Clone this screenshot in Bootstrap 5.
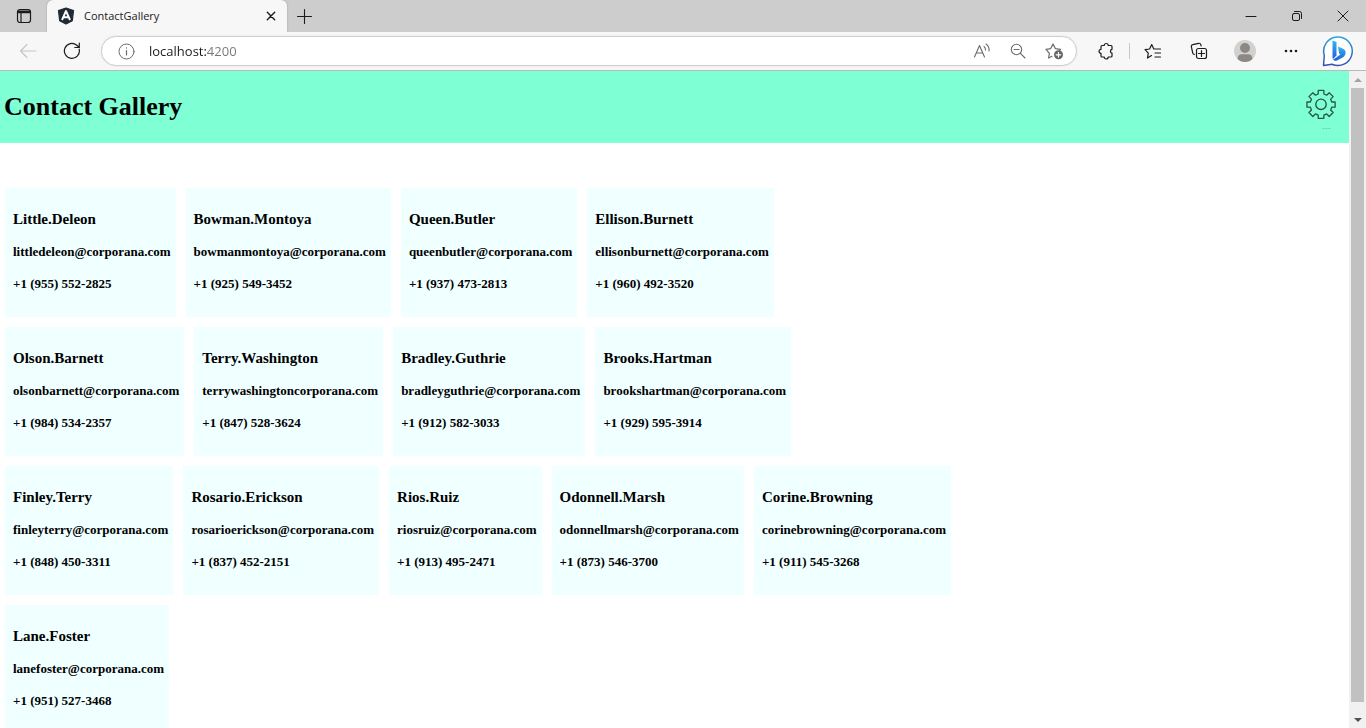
<!DOCTYPE html>
<html lang="en">
<head>
<meta charset="utf-8">
<meta name="viewport" content="width=device-width, initial-scale=1">
<title>ContactGallery</title>
<link href="https://cdn.jsdelivr.net/npm/bootstrap@5.3.0/dist/css/bootstrap.min.css" rel="stylesheet">
<style>
  body { font-family: "Open Sans", "Noto Sans", sans-serif; color: #000; }
  svg { display: block; fill: none; stroke: #1b1b1b; stroke-width: 1.2; stroke-linecap: round; stroke-linejoin: round; }
  button { flex: none; }
  .tool, .win, .inner { border: 0; padding: 0; background: none; display: flex; align-items: center; justify-content: center; }
  .tool { width: 46px; height: 38px; }
  .nav-tool { width: 44px; }
  .discover { width: 48px; }
  .win { width: 46px; height: 32px; }
  .inner { width: 36px; height: 28px; }
  .inner svg { stroke: #6b6b6b; }
  .tab-strip { height: 32px; background: #cdcdcd; }
  .tab-menu { width: 47px; }
  .page-tab { width: 240px; height: 32px; background: #f7f7f7; border-radius: 6px 6px 0 0; padding-left: 10px; box-shadow: 0 0 2px #999; }
  .tab-title { font-size: 11px; line-height: 16px; margin-left: 9px; color: #222; }
  .tab-close { width: 32px; }
  .new-tab { width: 34px; }
  .toolbar { height: 39px; background: #f7f7f7; border-bottom: 1px solid #b9b9b9; padding: 0 4px 0 6px; position: relative; }
  .address { height: 30px; background: #fff; border: 1px solid #cfcfcf; border-radius: 15px; margin: 0 6px 0 7px; padding: 0 4px 0 6px; box-shadow: 0 0 2px #ddd; }
  .address input { border: 0; outline: 0; padding: 0; margin-left: 5px; min-width: 0; font-size: 13px; line-height: 20px; color: transparent; caret-color: #000; background: linear-gradient(90deg, #1b1b1b 57px, #767676 57px); -webkit-background-clip: text; background-clip: text; }
  .split { width: 1px; height: 16px; background: #c9c9c9; }
  .app { font-family: "Liberation Serif", serif; font-weight: 700; background: #fff; }
  .app-head { background: #7fffd4; height: 72px; padding: 0 12px 0 4px; }
  .app-head h1 { font-size: 26px; line-height: 30px; font-weight: 700; }
  .gear { height: auto; width: auto; padding-top: 8px; }
  .gallery { padding: 45px 5px 0; }
  .contact { background: #f0ffff; padding: 21px 5px 25px 8px; }
  .contact h2 { font-size: 15px; line-height: 20px; font-weight: 700; margin: 0 0 15px; }
  .contact a, .contact p { display: block; font-size: 13px; line-height: 16px; margin: 0; color: #000; text-decoration: none; white-space: nowrap; }
  .contact a { margin-bottom: 16px; }
  .gap-cards { gap: 10px; }
  .rail { width: 17px; background: #f1f1f1; }
  .rail-thumb { width: 13px; background: #c1c1c1; }
  .rail-end { height: 17px; }
  .rail-foot { height: 26px; padding-top: 9px; }
</style>
</head>
<body class="vh-100 d-flex flex-column overflow-hidden">
  <header>
    <div class="tab-strip d-flex">
      <button class="win tab-menu" aria-label="Tab actions"><svg width="16" height="16" viewBox="0 0 16 16"><rect x="1.5" y="1.5" width="13" height="13" rx="2.5"/><path d="M2 3.3h12M2 4.300h12" stroke-width="1.8"/><path d="M5 5v9"/></svg></button>
      <div class="page-tab d-flex align-items-center">
        <svg width="18" height="18" viewBox="0 0 18 18"><path d="M9 1l7.5 2.6-1.2 10L9 17l-6.300-3.400L1.500 3.600z" fill="#1f2a36" stroke="#1f2a36"/><path d="M5 13L9 4l4 9M6.500 10.300h5" stroke="#fff" stroke-width="1.9" stroke-linecap="butt"/></svg>
        <span class="tab-title">ContactGallery</span>
        <button class="win tab-close ms-auto" aria-label="Close tab"><svg width="10" height="10" viewBox="0 0 10 10"><path d="M1.300 1.300l7.400 7.400M8.700 1.300L1.300 8.700" stroke-width="1.4"/></svg></button>
      </div>
      <button class="win new-tab" aria-label="New tab"><svg width="16" height="16" viewBox="0 0 16 16"><path d="M8.500 1.500v14M1.500 8.500h14" stroke-width="1.100"/></svg></button>
      <div class="d-flex ms-auto">
        <button class="win" aria-label="Minimize"><svg width="12" height="12" viewBox="0 0 12 12"><path d="M1 6.500h10" stroke-width="1"/></svg></button>
        <button class="win" aria-label="Restore"><svg width="12" height="12" viewBox="0 0 12 12"><g stroke-width="1"><rect x="1.500" y="3.500" width="7" height="7" rx="1.500"/><path d="M3.500 1.500H8.500a2 2 0 0 1 2 2V8.500"/></g></svg></button>
        <button class="win" aria-label="Close"><svg width="12" height="12" viewBox="0 0 12 12"><path d="M1 1l10 10M11 1L1 11" stroke-width="1"/></svg></button>
      </div>
    </div>
    <div class="toolbar d-flex align-items-center">
      <button class="tool nav-tool" aria-label="Back"><svg width="18" height="16" viewBox="0 0 18 16"><path d="M17 8H1.500M8 1.500L1.500 8 8 14.500" stroke="#c6c6c6"/></svg></button>
      <button class="tool nav-tool" aria-label="Reload"><svg width="18" height="18" viewBox="0 0 18 18"><path d="M16.200 7.200a7.500 7.500 0 1 1-2.400-4L16 5.300M16.300 1v4.500h-4.500"/></svg></button>
      <div class="address d-flex align-items-center flex-grow-1">
        <button class="inner" aria-label="Site information"><svg width="17" height="17" viewBox="0 0 17 17"><circle cx="8.500" cy="8.500" r="7.500" stroke-width="1"/><path d="M8.500 7.500v4.500M8.500 4.900v.2"/></svg></button>
        <input class="flex-grow-1" type="text" value="localhost:4200" aria-label="Address">
        <button class="inner" aria-label="Read aloud"><svg width="18" height="16" viewBox="0 0 18 16"><path d="M1.500 14L6.500 2.500 11.500 14M3.200 10h6.600M11 3.300q1.600 1.400 1.500 3.700M13 1q3.600 2.300 3 7" stroke-width="1.100"/></svg></button>
        <button class="inner" aria-label="Zoom"><svg width="16" height="16" viewBox="0 0 16 16"><g stroke-width="1.100"><circle cx="6.500" cy="6.500" r="5.200"/><path d="M4 6.500h5M10.400 10.400l4.600 4.600"/></g></svg></button>
        <button class="inner" aria-label="Add to favorites"><svg width="19" height="18" viewBox="0 0 19 18"><path d="M7 14.300l-3.400 1.700.8-4.700L1 7.300l4.700-.7L8 2l2.300 4.600 5.200.7-1.500 1.500"/><circle cx="13.500" cy="12.800" r="4.500" fill="#666" stroke="none"/><path d="M13.500 10.500v4.600M11.200 12.800h4.600" stroke="#fff"/></svg></button>
      </div>
      <button class="tool" aria-label="Extensions"><svg width="18" height="18" viewBox="0 0 18 18"><path d="M5 3.500h2.200a2 2 0 0 1 4 0H14a1 1 0 0 1 1 1v2.800a2 2 0 0 0 0 3.900V14a1 1 0 0 1-1 1h-2.800a2 2 0 0 1-4 0H5a1 1 0 0 1-1-1v-2.700a2 2 0 0 1 0-4V4.500a1 1 0 0 1 1-1z"/></svg></button>
      <div class="split"></div>
      <button class="tool" aria-label="Favorites"><svg width="18" height="17" viewBox="0 0 18 17"><path d="M7.500 12.500l-4 2.500.8-4.900L1 6.700l4.600-.7L7.700 1.500 9.800 6H16.500M11 10h5.500M11 14h5.500"/></svg></button>
      <button class="tool" aria-label="Collections"><svg width="18" height="18" viewBox="0 0 18 18"><path d="M4.300 12.500c-1-.3-1.400-.8-1.600-1.700L1.400 4.800c-.2-1 .3-1.900 1.300-2.100l6-1.400c1-.2 1.800.3 2.100 1.300l.3 1.200"/><rect x="6.500" y="6.500" width="10" height="10" rx="2"/><path d="M11.500 8.500v6M8.500 11.500h6"/></svg></button>
      <button class="tool" aria-label="Profile"><svg width="22" height="22" viewBox="0 0 22 22"><g stroke="none"><circle cx="11" cy="11" r="11" fill="#d3d1cf"/><circle cx="11" cy="8" r="5" fill="#8b8886"/><path d="M3.500 18.700Q4 14.300 8 14.300h6q4 0 4.500 4.400Q15.500 22 11 22T3.500 18.700z" fill="#8b8886"/></g></svg></button>
      <button class="tool" aria-label="Settings and more"><svg width="16" height="4" viewBox="0 0 16 4"><g fill="#1b1b1b" stroke="none"><circle cx="3" cy="2" r="1.300"/><circle cx="8" cy="2" r="1.300"/><circle cx="13" cy="2" r="1.300"/></g></svg></button>
      <button class="tool discover" aria-label="Discover"><svg width="32" height="32" viewBox="0 0 32 32"><defs><linearGradient id="ring" x1="0" y1="0" x2="0" y2="1"><stop offset="0" stop-color="#2ba6df"/><stop offset="1" stop-color="#3650ae"/></linearGradient><linearGradient id="bee" x1="0" y1="0" x2="0" y2="1"><stop offset="0" stop-color="#35b8ee"/><stop offset="1" stop-color="#1e5ddf"/></linearGradient></defs><path d="M1.500 30.500L2.300 20.500A14.300 14.300 0 1 1 10 29.200Z" fill="#fff" stroke="url(#ring)" stroke-width="1.500"/><path d="M10.500 5.500l4 1.500v13.500l-3.500 3.500q-.5-.5-.5-1.500z" fill="url(#bee)" stroke="none"/><path d="M16 11.500l5.500 2.500q2.500 1.300 2 4.500-.5 2.500-2.500 3.800L15 25.500q-2.500 1-4-.8l7.300-5.200-1.300-1.300z" fill="url(#bee)" stroke="none"/></svg></button>
    </div>
  </header>

  <div class="d-flex flex-grow-1 overflow-hidden">
    <main class="app flex-grow-1 overflow-hidden">
      <div class="app-head d-flex align-items-center justify-content-between">
        <h1 class="m-0">Contact Gallery</h1>
        <button class="inner gear" aria-label="Settings"><svg width="32" height="46" viewBox="0 0 32 46"><path d="M13 1.500h6v3.800l3 1.300 2.700-2.700 4.200 4.200-2.700 2.700 1.200 3H31v5.500h-3.600l-1.200 3 2.700 2.700-4.200 4.200L22 26.500l-3 1.300v3.400h-6v-3.400l-3-1.300-2.700 2.700L3.100 25l2.700-2.700-1.200-3H1v-5.500h3.600l1.200-3-2.700-2.700 4.200-4.200L10 6.600l3-1.300z" transform="translate(1 1) scale(.94)" stroke="#285747" stroke-width="1.400"/><circle cx="16" cy="16.300" r="5.200" stroke="#285747" stroke-width="1.400"/><path d="M18 40.500h1M21 40.500h1M24 40.500h1" stroke="#66cfa9" stroke-width="1"/></svg></button>
      </div>
      <div class="gallery d-flex flex-column gap-cards">
        <div class="d-flex gap-cards">
          <article class="contact"><h2>Little.Deleon</h2><a href="mailto:littledeleon@corporana.com">littledeleon@corporana.com</a><p>+1 (955) 552-2825</p></article>
          <article class="contact"><h2>Bowman.Montoya</h2><a href="mailto:bowmanmontoya@corporana.com">bowmanmontoya@corporana.com</a><p>+1 (925) 549-3452</p></article>
          <article class="contact"><h2>Queen.Butler</h2><a href="mailto:queenbutler@corporana.com">queenbutler@corporana.com</a><p>+1 (937) 473-2813</p></article>
          <article class="contact"><h2>Ellison.Burnett</h2><a href="mailto:ellisonburnett@corporana.com">ellisonburnett@corporana.com</a><p>+1 (960) 492-3520</p></article>
        </div>
        <div class="d-flex gap-cards">
          <article class="contact"><h2>Olson.Barnett</h2><a href="mailto:olsonbarnett@corporana.com">olsonbarnett@corporana.com</a><p>+1 (984) 534-2357</p></article>
          <article class="contact"><h2>Terry.Washington</h2><a href="mailto:terrywashingtoncorporana.com">terrywashingtoncorporana.com</a><p>+1 (847) 528-3624</p></article>
          <article class="contact"><h2>Bradley.Guthrie</h2><a href="mailto:bradleyguthrie@corporana.com">bradleyguthrie@corporana.com</a><p>+1 (912) 582-3033</p></article>
          <article class="contact"><h2>Brooks.Hartman</h2><a href="mailto:brookshartman@corporana.com">brookshartman@corporana.com</a><p>+1 (929) 595-3914</p></article>
        </div>
        <div class="d-flex gap-cards">
          <article class="contact"><h2>Finley.Terry</h2><a href="mailto:finleyterry@corporana.com">finleyterry@corporana.com</a><p>+1 (848) 450-3311</p></article>
          <article class="contact"><h2>Rosario.Erickson</h2><a href="mailto:rosarioerickson@corporana.com">rosarioerickson@corporana.com</a><p>+1 (837) 452-2151</p></article>
          <article class="contact"><h2>Rios.Ruiz</h2><a href="mailto:riosruiz@corporana.com">riosruiz@corporana.com</a><p>+1 (913) 495-2471</p></article>
          <article class="contact"><h2>Odonnell.Marsh</h2><a href="mailto:odonnellmarsh@corporana.com">odonnellmarsh@corporana.com</a><p>+1 (873) 546-3700</p></article>
          <article class="contact"><h2>Corine.Browning</h2><a href="mailto:corinebrowning@corporana.com">corinebrowning@corporana.com</a><p>+1 (911) 545-3268</p></article>
        </div>
        <div class="d-flex gap-cards">
          <article class="contact"><h2>Lane.Foster</h2><a href="mailto:lanefoster@corporana.com">lanefoster@corporana.com</a><p>+1 (951) 527-3468</p></article>
        </div>
      </div>
    </main>
    <div class="rail d-flex flex-column align-items-center flex-shrink-0" aria-hidden="true">
      <div class="rail-end d-flex align-items-center"><svg width="8" height="4" viewBox="0 0 8 4"><path d="M0 4l4-4 4 4z" fill="#a3a3a3" stroke="none"/></svg></div>
      <div class="rail-thumb flex-grow-1"></div>
      <div class="rail-foot d-flex align-items-center"><svg width="8" height="4" viewBox="0 0 8 4"><path d="M0 0l4 4 4-4z" fill="#505050" stroke="none"/></svg></div>
    </div>
  </div>
<script src="https://cdn.jsdelivr.net/npm/bootstrap@5.3.0/dist/js/bootstrap.bundle.min.js"></script>
</body>
</html>
